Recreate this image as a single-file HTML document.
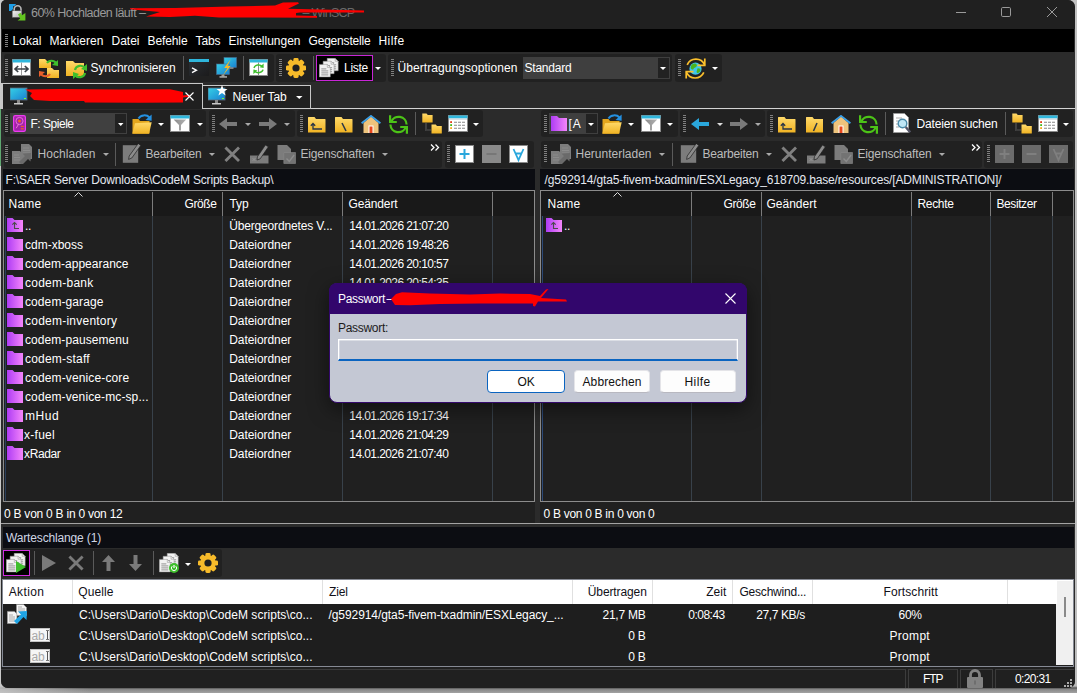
<!DOCTYPE html>
<html lang="de"><head><meta charset="utf-8"><title>WinSCP</title>
<style>
html,body{margin:0;padding:0;}
body{width:1077px;height:693px;overflow:hidden;position:relative;background:linear-gradient(to right,rgba(205,205,205,.75) 0,rgba(205,205,205,0) 90px),linear-gradient(to bottom,#c2c2c2 0,#bebebe 686px,#585858 688px,#888 689.5px,#a2a2a2 693px);font-family:"Liberation Sans", sans-serif;font-size:12px;}
div,span,svg{position:absolute;box-sizing:border-box;}
span{white-space:pre;line-height:16px;height:16px;}
</style></head><body>
<div style="left:1px;top:0px;width:1074px;height:688px;background:#2b2b2b;border-radius:5px 7px 7px 7px;"></div>
<div style="left:1px;top:0px;width:1074px;height:29px;background:#202020;border-radius:5px 7px 0 0;"></div>
<div style="left:2px;top:29px;width:1072px;height:23px;background:#000;"></div>
<svg style="left:9px;top:4px;" width="17" height="17" viewBox="0 0 17 17"><polygon points="0,0 7.2,0 5.2,2.2 4,2.2 4,5 2,7 0,7" fill="#1e9fe8"/><path d="M5.2 7.2V5.2a3.4 3.4 0 0 1 6.8 0v2" fill="none" stroke="#b8b8b8" stroke-width="1.6"/><rect x="3.2" y="6.8" width="9.6" height="6.6" fill="url(#lk)" stroke="#555" stroke-width=".5"/><polygon points="9,10.5 11.5,8.8 13,11.2 16.4,9 16.4,16.6 8.6,16.6 11.2,14.6" fill="#62c420"/></svg>
<span style="left:31.00px;top:5.00px;color:#9a9a9a;font-size:12.5px;letter-spacing:-0.537px;">60% Hochladen läuft –</span>
<span style="left:302.50px;top:5.00px;color:#6a6a6a;font-size:12.5px;letter-spacing:-0.707px;">– WinSCP</span>
<svg style="left:0px;top:0px;" width="380" height="28" viewBox="0 0 380 28"><path d="M146 16.5 L160 12 L130 9.3 L130 8.2 L175 8 L230 6.5 L275 5.5 L283 2.5 L298 2.2 L299 3.5 L288 8.8 L364 10.6 L364 12.6 L300 12.4 L296 13 L296 15.6 L317 16 L317 17.8 L255 17.6 L219 17.6 L195 15.8 L170 17 Z" fill="#fe0000"/></svg>
<svg style="left:956px;top:11px;" width="11" height="2" viewBox="0 0 11 2"><rect x="0" y="1" width="10" height="1" fill="#9a9a9a"/></svg>
<svg style="left:1000px;top:6px;" width="12" height="12" viewBox="0 0 12 12"><rect x="1.5" y="1.5" width="9" height="9" rx="1.2" fill="none" stroke="#9a9a9a" stroke-width="1"/></svg>
<svg style="left:1046px;top:6px;" width="12" height="12" viewBox="0 0 12 12"><path d="M1 1 L11 11 M11 1 L1 11" stroke="#9a9a9a" stroke-width="1"/></svg>
<div style="left:5px;top:34px;width:3px;height:14px;background:repeating-linear-gradient(to bottom,#808080 0,#808080 1px,transparent 1px,transparent 2px);"></div>
<span style="left:12.50px;top:33.00px;color:#fff;font-size:12px;letter-spacing:0.062px;">Lokal</span>
<span style="left:49.50px;top:33.00px;color:#fff;font-size:12px;letter-spacing:0.071px;">Markieren</span>
<span style="left:111.50px;top:33.00px;color:#fff;font-size:12px;letter-spacing:-0.003px;">Datei</span>
<span style="left:147.50px;top:33.00px;color:#fff;font-size:12px;letter-spacing:-0.100px;">Befehle</span>
<span style="left:195.50px;top:33.00px;color:#fff;font-size:12px;letter-spacing:-0.090px;">Tabs</span>
<span style="left:228.50px;top:33.00px;color:#fff;font-size:12px;letter-spacing:-0.005px;">Einstellungen</span>
<span style="left:308.50px;top:33.00px;color:#fff;font-size:12px;letter-spacing:-0.186px;">Gegenstelle</span>
<span style="left:378.50px;top:33.00px;color:#fff;font-size:12px;letter-spacing:0.397px;">Hilfe</span>
<div style="left:4px;top:54px;width:270px;height:28px;background:#212121;border-radius:3px;"></div>
<div style="left:276px;top:54px;width:110px;height:28px;background:#212121;border-radius:3px;"></div>
<div style="left:388px;top:54px;width:284px;height:28px;background:#212121;border-radius:3px;"></div>
<div style="left:675px;top:54px;width:47px;height:28px;background:#212121;border-radius:3px;"></div>
<div style="left:5px;top:59px;width:3px;height:18px;background:repeating-linear-gradient(to bottom,#808080 0,#808080 1px,transparent 1px,transparent 2px);"></div>
<div style="left:279px;top:59px;width:3px;height:18px;background:repeating-linear-gradient(to bottom,#808080 0,#808080 1px,transparent 1px,transparent 2px);"></div>
<div style="left:391px;top:59px;width:3px;height:18px;background:repeating-linear-gradient(to bottom,#808080 0,#808080 1px,transparent 1px,transparent 2px);"></div>
<div style="left:678px;top:59px;width:3px;height:18px;background:repeating-linear-gradient(to bottom,#808080 0,#808080 1px,transparent 1px,transparent 2px);"></div>
<svg width="0" height="0" style="left:0;top:0"><defs><linearGradient id="fg" x1="0" y1="0" x2="0" y2="1"><stop offset="0" stop-color="#ffd96a"/><stop offset="1" stop-color="#f0b323"/></linearGradient><linearGradient id="pg" x1="0" y1="0" x2="1" y2="0"><stop offset="0" stop-color="#ae3cf4"/><stop offset="1" stop-color="#f486fa"/></linearGradient><linearGradient id="mon" x1="0" y1="0" x2="1" y2="1"><stop offset="0" stop-color="#35d0e6"/><stop offset="1" stop-color="#1a7fd0"/></linearGradient><linearGradient id="fu" x1="0" y1="0" x2="1" y2="0"><stop offset="0" stop-color="#8a8a8a"/><stop offset="1" stop-color="#b4b4b4"/></linearGradient><linearGradient id="cn" x1="0" y1="0" x2="1" y2="1"><stop offset="0" stop-color="#2c3036"/><stop offset="1" stop-color="#1b1b1c"/></linearGradient><linearGradient id="lk" x1="0" y1="0" x2="1" y2="1"><stop offset="0" stop-color="#f2f2f2"/><stop offset="1" stop-color="#b4b4b4"/></linearGradient></defs></svg>
<svg style="left:12px;top:59px;" width="19" height="17" viewBox="0 0 19 17"><rect x="0.5" y="0.5" width="18" height="16" fill="#fff" stroke="#8a8a8a"/><rect x="0.5" y="0.5" width="18" height="3" fill="#2fb6dc"/><path d="M9.5 3.5V16.5" stroke="#999" stroke-width="1"/><path d="M3 10H16M6.2 7L3 10L6.2 13M12.8 7L16 10L12.8 13" stroke="#3c4248" stroke-width="1.7" fill="none"/></svg>
<svg style="left:38px;top:57.5px;" width="21" height="21" viewBox="0 0 21 21"><path d="M1 1h6l2 2h4v7H1z" fill="url(#fg)"/><path d="M9 10h5l2 2h5v8H9z" fill="url(#fg)"/><path d="M9 5a5 4 0 0 1 9 0" stroke="#3fbf2d" stroke-width="2" fill="none"/><polygon points="20,2 20,8 14,7" fill="#3fbf2d"/><path d="M12 16a5 4 0 0 1-9 0" stroke="#e8602c" stroke-width="2" fill="none"/><polygon points="1,19 1,13 7,14" fill="#e8602c"/></svg>
<svg style="left:65.7px;top:58.5px;" width="21" height="21" viewBox="0 0 21 21"><path d="M0 2h7l2 2h9v13H0z" fill="url(#fg)"/><path d="M9 11a5.5 5 0 0 1 10-2" stroke="#3fbf2d" stroke-width="2.2" fill="none"/><polygon points="21,5 21,12 15,10" fill="#3fbf2d"/><path d="M19 14a5.5 5 0 0 1-10 2" stroke="#3fbf2d" stroke-width="2.2" fill="none"/><polygon points="7,20 7,13 13,15" fill="#3fbf2d"/></svg>
<span style="left:90.50px;top:60.00px;color:#fff;font-size:12px;letter-spacing:-0.070px;">Synchronisieren</span>
<div style="left:183px;top:56px;width:1px;height:24px;background:#5a5a5a;"></div>
<svg style="left:189px;top:59px;" width="20" height="17" viewBox="0 0 20 17"><rect x="0" y="0" width="20" height="17" fill="url(#cn)"/><rect x="0" y="0" width="20" height="3" fill="#2fb6dc"/><path d="M3 8.8l4.4 2.4-4.4 2.4" stroke="#fff" stroke-width="1.4" fill="none"/></svg>
<svg style="left:216px;top:57px;" width="21" height="21" viewBox="0 0 21 21"><rect x="8" y="0.5" width="12.5" height="10" fill="url(#mon)" stroke="#4a6a8a" stroke-width=".6"/><rect x="0.5" y="7" width="13" height="10.5" fill="url(#mon)" stroke="#4a6a8a" stroke-width=".6"/><rect x="5.5" y="17.5" width="3" height="2" fill="#999"/><rect x="3.5" y="19.3" width="7.5" height="1.3" fill="#c4c4c4"/><rect x="13.5" y="10.5" width="4" height="1.2" fill="#aaa"/><polygon points="14.8,2 8.2,11 11.4,11 6.5,19 14.6,9 11.5,9" fill="#f8b823"/></svg>
<div style="left:243px;top:56px;width:1px;height:24px;background:#5a5a5a;"></div>
<svg style="left:249px;top:59px;" width="19" height="17" viewBox="0 0 19 17"><rect x="0.5" y="0.5" width="18" height="16" fill="#fff" stroke="#8a8a8a"/><rect x="0.5" y="0.5" width="18" height="3" fill="#2fb6dc"/><path d="M9.5 3.5V16.5" stroke="#8a8a8a" stroke-width="1"/><path d="M5 9a4.6 3.6 0 0 1 8.2-1.6M14 10.6a4.6 3.6 0 0 1-8.2 1.6" stroke="#3fbf2d" stroke-width="1.5" fill="none"/><polygon points="14.6,4.6 14.6,9 10.6,8.2" fill="#3fbf2d"/><polygon points="4.4,15 4.4,10.6 8.4,11.4" fill="#3fbf2d"/></svg>
<svg style="left:286px;top:58px;" width="20" height="20" viewBox="0 0 20 20"><g transform="translate(10 10)"><g fill="#f7bb2a"><rect x="-2.6" y="-10" width="5.2" height="20" rx="1.4" transform="rotate(0)"/><rect x="-2.6" y="-10" width="5.2" height="20" rx="1.4" transform="rotate(45)"/><rect x="-2.6" y="-10" width="5.2" height="20" rx="1.4" transform="rotate(90)"/><rect x="-2.6" y="-10" width="5.2" height="20" rx="1.4" transform="rotate(135)"/></g><circle r="7.7" fill="#f7bb2a"/><circle r="3.6" fill="#212121"/></g></svg>
<div style="left:313px;top:56px;width:1px;height:24px;background:#5a5a5a;"></div>
<div style="left:316px;top:55px;width:57px;height:26px;background:#000;border:1px solid #c826d6;"></div>
<svg style="left:319px;top:58px;" width="20" height="20" viewBox="0 0 20 20"><path d="M8.2 0.3h8l3 3v9.5h-11z" fill="#f2f2f2" stroke="#8a8a8a" stroke-width=".5"/><path d="M16.2 0.3v3h3" fill="none" stroke="#8a8a8a" stroke-width=".5"/><path d="M10.2 4.8h5M10.2 6.8h7M10.2 8.8h7M10.2 10.8h7" stroke="#8a8a8a" stroke-width=".9"/><path d="M4.1 3.2h8l3 3v9.5h-11z" fill="#f2f2f2" stroke="#8a8a8a" stroke-width=".5"/><path d="M12.1 3.2v3h3" fill="none" stroke="#8a8a8a" stroke-width=".5"/><path d="M6.1 7.7h5M6.1 9.7h7M6.1 11.7h7M6.1 13.7h7" stroke="#8a8a8a" stroke-width=".9"/><path d="M0.3 6.4h8l3 3v9.5h-11z" fill="#f2f2f2" stroke="#8a8a8a" stroke-width=".5"/><path d="M8.3 6.4v3h3" fill="none" stroke="#8a8a8a" stroke-width=".5"/><path d="M2.3 10.9h5M2.3 12.9h7M2.3 14.9h7M2.3 16.9h7" stroke="#8a8a8a" stroke-width=".9"/></svg>
<span style="left:344.00px;top:60.00px;color:#fff;font-size:12px;letter-spacing:-0.272px;">Liste</span>
<svg style="left:375px;top:67.0px;" width="6" height="3" viewBox="0 0 6 3"><polygon points="0,0 6,0 3.0,3" fill="#fff"/></svg>
<span style="left:397.50px;top:60.00px;color:#fff;font-size:12px;letter-spacing:0.062px;">Übertragungsoptionen</span>
<div style="left:523px;top:57px;width:147px;height:22px;background:#3f3f3f;"></div>
<div style="left:658px;top:58px;width:11px;height:20px;background:#222;"></div>
<svg style="left:660px;top:67.0px;" width="6" height="3" viewBox="0 0 6 3"><polygon points="0,0 6,0 3.0,3" fill="#fff"/></svg>
<span style="left:524.50px;top:60.00px;color:#fff;font-size:12px;letter-spacing:-0.213px;">Standard</span>
<svg style="left:684.5px;top:57.5px;" width="21" height="21" viewBox="0 0 21 21"><circle cx="10.5" cy="10.7" r="6.1" fill="#3ec6ea"/><path d="M6 8c1.5-2.6 4.5-3 5.6-1.6s-.6 2.6-2 3.4-1 2.4-2.4 1.8S5.2 9.6 6 8zM12.4 10.5c1.8-.6 3.4.4 3 2s-2.4 3-3.4 2.2.2-2.4.4-4.2z" fill="#4ab41e"/><g stroke="#fbc02d" stroke-width="1.7" fill="none"><path d="M2.2 6.8A9.5 9.5 0 0 1 19.6 7"/><path d="M18.8 14.4A9.5 9.5 0 0 1 1.4 14.2"/><path d="M19.8 0.5V7.4H12.5"/><path d="M1.2 20.5V13.6H8.5"/></g></svg>
<svg style="left:711.8px;top:67.0px;" width="6" height="3" viewBox="0 0 6 3"><polygon points="0,0 6,0 3.0,3" fill="#fff"/></svg>
<div style="left:1px;top:108px;width:1074px;height:1px;background:#d4d4d4;"></div>
<div style="left:1px;top:83px;width:202px;height:26px;background:#202020;border:1px solid #c8c8c8;border-bottom:none;border-left:2px solid #c8c8c8;"></div>
<div style="left:202px;top:85px;width:109px;height:24px;background:#202020;border:1px solid #c8c8c8;"></div>
<svg style="left:10px;top:84.7px;" width="20" height="20" viewBox="0 -3 20 20"><rect x="0" y="0" width="17" height="12" fill="url(#mon)" stroke="#5a6a7a" stroke-width=".8"/><rect x="14" y="10" width="2" height="1" fill="#7f3"/><rect x="7" y="12" width="3" height="3" fill="#8a8a8a"/><rect x="4" y="15" width="9" height="1.5" fill="#c8c8c8"/></svg>
<svg style="left:0px;top:82px;" width="210" height="28" viewBox="0 82 210 28"><path d="M25 89.5 L60 89 L120 89.6 L170 89.3 L183 92 L183 95.5 L190 94.8 L190 96.6 L183 97.5 L183 102.5 L140 102.8 L85 102.5 L84 101 L50 101 L34 100 L30 96 L32 93 Z" fill="#fe0000"/></svg>
<svg style="left:185px;top:92px;" width="9" height="9" viewBox="0 0 9 9"><path d="M0.5 0.5L8.5 8.5M8.5 0.5L0.5 8.5" stroke="#fff" stroke-width="1.1"/></svg>
<svg style="left:208.3px;top:85px;" width="20" height="20" viewBox="0 -3 20 20"><rect x="0" y="0" width="17" height="12" fill="url(#mon)" stroke="#5a6a7a" stroke-width=".8"/><rect x="14" y="10" width="2" height="1" fill="#7f3"/><rect x="7" y="12" width="3" height="3" fill="#8a8a8a"/><rect x="4" y="15" width="9" height="1.5" fill="#c8c8c8"/><polygon points="14,-3 15.5,1 19.5,1 16.3,3.4 17.6,7.5 14,5 10.4,7.5 11.7,3.4 8.5,1 12.5,1" fill="#fff"/></svg>
<span style="left:232.50px;top:89.00px;color:#fff;font-size:12px;letter-spacing:-0.128px;">Neuer Tab</span>
<svg style="left:296px;top:96.0px;" width="6.5" height="3" viewBox="0 0 6.5 3"><polygon points="0,0 6.5,0 3.25,3" fill="#fff"/></svg>
<div style="left:1px;top:109px;width:1074px;height:60px;background:#2b2b2b;"></div>
<div style="left:0px;top:109px;width:1px;height:57px;background:#5ea870;"></div>
<div style="left:4px;top:110px;width:202px;height:27px;background:#212121;border-radius:3px;"></div>
<div style="left:209px;top:110px;width:86px;height:27px;background:#212121;border-radius:3px;"></div>
<div style="left:297px;top:110px;width:186px;height:27px;background:#212121;border-radius:3px;"></div>
<div style="left:5px;top:115px;width:3px;height:18px;background:repeating-linear-gradient(to bottom,#808080 0,#808080 1px,transparent 1px,transparent 2px);"></div>
<div style="left:212px;top:115px;width:3px;height:18px;background:repeating-linear-gradient(to bottom,#808080 0,#808080 1px,transparent 1px,transparent 2px);"></div>
<div style="left:300px;top:115px;width:3px;height:18px;background:repeating-linear-gradient(to bottom,#808080 0,#808080 1px,transparent 1px,transparent 2px);"></div>
<div style="left:10px;top:113px;width:117px;height:21px;background:#404040;"></div>
<div style="left:115px;top:114px;width:11px;height:19px;background:#222;"></div>
<svg style="left:118px;top:123.0px;" width="5.5" height="3" viewBox="0 0 5.5 3"><polygon points="0,0 5.5,0 2.75,3" fill="#fff"/></svg>
<svg style="left:13.3px;top:115.3px;" width="13" height="17" viewBox="0 0 13 17"><rect x="0.6" y="0.6" width="11.8" height="15.8" rx="1.6" fill="#a222aa" stroke="#ee3cf0" stroke-width="1.2"/><circle cx="6.5" cy="6" r="3.6" fill="none" stroke="#f27ad8" stroke-width=".9"/><circle cx="6.5" cy="6" r="1.5" fill="#f0602a"/><path d="M3.2 13.2l2.6-4.4" stroke="#f27ad8" stroke-width=".9"/><rect x="7.8" y="10.8" width="3" height="1.2" fill="#f0602a"/><rect x="7.8" y="13.2" width="3" height="1.2" fill="#f0602a"/></svg>
<span style="left:30.50px;top:116.00px;color:#fff;font-size:12px;letter-spacing:-0.484px;">F: Spiele</span>
<svg style="left:131.5px;top:113.5px;" width="20" height="20" viewBox="0 0 20 20"><path d="M0.5 5h6l1.5 2h9.5v12.5H0.5z" fill="#e3a61e"/><path d="M0.3 19.7L3 9.2l16.7-1L17 19.7z" fill="url(#fg)"/><path d="M6.5 4.5a6.5 5.5 0 0 1 11-1" stroke="#2490e0" stroke-width="2" fill="none"/><polygon points="19.6,0.5 19.6,6.8 13.5,6" fill="#2490e0"/></svg>
<svg style="left:157.5px;top:123.0px;" width="6" height="3" viewBox="0 0 6 3"><polygon points="0,0 6,0 3.0,3" fill="#fff"/></svg>
<svg style="left:170px;top:115px;" width="20" height="17" viewBox="0 0 20 17"><rect x="0.5" y="0.5" width="19" height="16" fill="#fff" stroke="#8a8a8a"/><rect x="0.5" y="0.5" width="19" height="3" fill="#2fb6dc"/><polygon points="3.6,4.5 16.2,4.5 11,10 11,15.5 9,15.5 9,10" fill="url(#fu)"/></svg>
<svg style="left:196.5px;top:123.0px;" width="6" height="3" viewBox="0 0 6 3"><polygon points="0,0 6,0 3.0,3" fill="#fff"/></svg>
<svg style="left:219px;top:118px;" width="18" height="12" viewBox="0 0 18 12"><polygon points="0,6 8,0 8,4 18,4 18,8 8,8 8,12" fill="#7a7a7a"/></svg>
<svg style="left:245px;top:123.0px;" width="6" height="3" viewBox="0 0 6 3"><polygon points="0,0 6,0 3.0,3" fill="#aaa"/></svg>
<svg style="left:259px;top:118px;" width="18" height="12" viewBox="0 0 18 12"><polygon points="18,6 10,0 10,4 0,4 0,8 10,8 10,12" fill="#7a7a7a"/></svg>
<svg style="left:284px;top:123.0px;" width="6" height="3" viewBox="0 0 6 3"><polygon points="0,0 6,0 3.0,3" fill="#aaa"/></svg>
<svg style="left:308px;top:117px;" width="17.5" height="16" viewBox="0 0 17.5 16"><path d="M0 0.5a.5.5 0 0 1 .5-.5h6l1.5 2h9a.5.5 0 0 1 .5.5v13H0z" fill="url(#fg)"/><path d="M5 6.5v5.5h9M2.8 8.7L5 6.5l2.2 2.2" stroke="#2a3648" stroke-width="1.3" fill="none"/></svg>
<svg style="left:335px;top:117px;" width="17.5" height="16" viewBox="0 0 17.5 16"><path d="M0 0.5a.5.5 0 0 1 .5-.5h6l1.5 2h9a.5.5 0 0 1 .5.5v13H0z" fill="url(#fg)"/><path d="M7 6l4 8" stroke="#2a3648" stroke-width="1.5"/></svg>
<svg style="left:361px;top:115px;" width="20" height="18" viewBox="0 0 20 18"><polygon points="2.5,8 10,1.5 17.5,8 17.5,18 2.5,18" fill="#eec47c"/><rect x="7.5" y="10.5" width="5" height="7.5" fill="#fff"/><rect x="8.5" y="11.5" width="3" height="6.5" fill="#e8471c"/><path d="M0.6 8.2L10 0.9l9.4 7.3" stroke="#3aa0e8" stroke-width="1.8" fill="none"/></svg>
<svg style="left:388.5px;top:114.5px;" width="19" height="19" viewBox="0 0 19 19"><g stroke="#4cc417" stroke-width="2.2" fill="none"><path d="M2.2 6.8A8 8 0 0 1 17.6 9.5"/><path d="M16.8 12.2A8 8 0 0 1 1.4 9.5"/><path d="M1.1 0.3V7H7.8"/><path d="M17.9 18.7V12H11.2"/></g></svg>
<div style="left:415px;top:112px;width:1px;height:23px;background:#5a5a5a;"></div>
<svg style="left:421.5px;top:113.3px;" width="20" height="21" viewBox="0 0 20 21"><path d="M0.3 0.5h4.2l1.3 1.5h4.8v7.5H0.3z" fill="url(#fg)"/><path d="M9.5 11.5h4.2l1.3 1.5h4.8v7.5H9.5z" fill="url(#fg)"/><path d="M4 10.5v6.5h5" stroke="#8a8a8a" stroke-width="1.2" stroke-dasharray="1 1" fill="none"/></svg>
<svg style="left:448px;top:115px;" width="20" height="17" viewBox="0 0 20 17"><rect x="0.5" y="0.5" width="19" height="16" fill="#fff" stroke="#8a8a8a"/><rect x="0.5" y="0.5" width="19" height="3" fill="#2fb6dc"/><rect x="1" y="3.5" width="18" height="1.4" fill="#d8dde4"/><rect x="2.2" y="6.2" width="1.8" height="1.8" fill="#e23a14"/><rect x="2.2" y="9.2" width="1.8" height="1.8" fill="#3fb91d"/><rect x="2.2" y="12.2" width="1.8" height="1.8" fill="#f5a81c"/><path d="M6 7.2h3M10 7.2h3M14 7.2h3M6 10.2h3M10 10.2h3M14 10.2h3M6 13.2h3M10 13.2h3M14 13.2h3" stroke="#888" stroke-width="1.1"/></svg>
<svg style="left:472.5px;top:123.0px;" width="6" height="3" viewBox="0 0 6 3"><polygon points="0,0 6,0 3.0,3" fill="#fff"/></svg>
<div style="left:4px;top:141px;width:438px;height:27px;background:#212121;border-radius:3px;"></div>
<div style="left:445px;top:141px;width:89px;height:27px;background:#212121;border-radius:3px;"></div>
<div style="left:5px;top:145px;width:3px;height:18px;background:repeating-linear-gradient(to bottom,#808080 0,#808080 1px,transparent 1px,transparent 2px);"></div>
<div style="left:447px;top:145px;width:3px;height:18px;background:repeating-linear-gradient(to bottom,#808080 0,#808080 1px,transparent 1px,transparent 2px);"></div>
<svg style="left:12px;top:144px;" width="21" height="20" viewBox="0 0 21 20"><path d="M9 0h8l3 3v12H9z" fill="#7c7c7c"/><path d="M11 4h6M11 6.5h7M11 9h7" stroke="#8c8c8c" stroke-width=".9"/><path d="M0 7h8l3 3v10H0z" fill="#7c7c7c"/><path d="M2 11h5M2 13.5h6M2 16h6" stroke="#8c8c8c" stroke-width=".9"/><polygon points="7,18 13,12 10.5,9.5 19,9 18.5,17.5 16,15 10,21" fill="#6a6a6a"/></svg>
<span style="left:37.50px;top:146.00px;color:#bcbcbc;font-size:12px;letter-spacing:0.069px;">Hochladen</span>
<svg style="left:103px;top:153.0px;" width="6" height="3" viewBox="0 0 6 3"><polygon points="0,0 6,0 3.0,3" fill="#aaa"/></svg>
<div style="left:115px;top:143px;width:1px;height:23px;background:#5a5a5a;"></div>
<svg style="left:122px;top:144px;" width="19" height="20" viewBox="0 0 19 20"><path d="M0.8 1.2h15.4v17.6H0.8z" fill="#7c7c7c"/><path d="M16.2 -0.5l2.6 1.9-9 12.6-3.2 1.4 0.6-3.4z" fill="#8c8c8c" stroke="#212121" stroke-width=".7"/></svg>
<span style="left:145.50px;top:146.00px;color:#bcbcbc;font-size:12px;letter-spacing:-0.205px;">Bearbeiten</span>
<svg style="left:209px;top:153.0px;" width="6" height="3" viewBox="0 0 6 3"><polygon points="0,0 6,0 3.0,3" fill="#aaa"/></svg>
<svg style="left:223.5px;top:146px;" width="16.5" height="16.5" viewBox="0 0 17 17"><path d="M1.5 1.5L15.5 15.5M15.5 1.5L1.5 15.5" stroke="#808080" stroke-width="3"/></svg>
<svg style="left:250px;top:145px;" width="19" height="19" viewBox="0 0 19 19"><rect x="0" y="10.5" width="18.5" height="8" fill="#7c7c7c"/><path d="M15.4 0l3 1.8-8.2 12-3.2 1.2 0.4-3.2z" fill="#8c8c8c" stroke="#212121" stroke-width=".7"/><path d="M2.5 13l3 3M5.5 13l-3 3" stroke="#9a9a9a" stroke-width=".8"/></svg>
<svg style="left:277px;top:144px;" width="19" height="20" viewBox="0 0 19 20"><path d="M0.5 1h9.5l4 4v11H0.5z" fill="#7c7c7c"/><path d="M6.8 8.5h11.7v11H6.8z" fill="#737373" stroke="#8a8a8a" stroke-width=".6"/><path d="M9.5 14.5l2.8 3 4.8-6.5" stroke="#8c8c8c" stroke-width="1.4" fill="none"/></svg>
<span style="left:300.50px;top:146.00px;color:#bcbcbc;font-size:12px;letter-spacing:-0.159px;">Eigenschaften</span>
<svg style="left:382px;top:153.0px;" width="6" height="3" viewBox="0 0 6 3"><polygon points="0,0 6,0 3.0,3" fill="#aaa"/></svg>
<svg style="left:430px;top:144px;" width="10" height="7" viewBox="0 0 10 7"><path d="M1 0.5l3 3-3 3M5.5 0.5l3 3-3 3" stroke="#fff" stroke-width="1.3" fill="none"/></svg>
<svg style="left:455px;top:145px;" width="19" height="18" viewBox="0 0 19 18"><rect x="0.5" y="0.5" width="18" height="17" fill="#fff" stroke="#8a8a8a"/><path d="M9.5 4v10M4.5 9h10" stroke="#2aa7dc" stroke-width="2"/></svg>
<svg style="left:482px;top:145px;" width="19" height="18" viewBox="0 0 19 18"><rect x="0.5" y="0.5" width="18" height="17" fill="#8a8a8a" stroke="#8a8a8a"/><path d="M4.5 9h10" stroke="#777" stroke-width="2"/></svg>
<svg style="left:509px;top:145px;" width="19" height="18" viewBox="0 0 19 18"><rect x="0.5" y="0.5" width="18" height="17" fill="#fff" stroke="#8a8a8a"/><path d="M4.5 4l5 11 5-11M6.5 8.5h6" stroke="#2aa7dc" stroke-width="1.8" fill="none"/></svg>
<div style="left:541px;top:110px;width:137px;height:27px;background:#212121;border-radius:3px;"></div>
<div style="left:680px;top:110px;width:85px;height:27px;background:#212121;border-radius:3px;"></div>
<div style="left:767px;top:110px;width:306px;height:27px;background:#212121;border-radius:3px;"></div>
<div style="left:544px;top:115px;width:3px;height:18px;background:repeating-linear-gradient(to bottom,#808080 0,#808080 1px,transparent 1px,transparent 2px);"></div>
<div style="left:683px;top:115px;width:3px;height:18px;background:repeating-linear-gradient(to bottom,#808080 0,#808080 1px,transparent 1px,transparent 2px);"></div>
<div style="left:770px;top:115px;width:3px;height:18px;background:repeating-linear-gradient(to bottom,#808080 0,#808080 1px,transparent 1px,transparent 2px);"></div>
<div style="left:549px;top:113px;width:49px;height:21px;background:#3f3f3f;"></div>
<div style="left:586px;top:114px;width:11px;height:19px;background:#222;"></div>
<svg style="left:588px;top:123.0px;" width="6" height="3" viewBox="0 0 6 3"><polygon points="0,0 6,0 3.0,3" fill="#fff"/></svg>
<svg style="left:551px;top:116px;" width="16" height="15" viewBox="0 0 16 15"><path d="M0 0h6l2 2h8v13H0z" fill="url(#pg)"/></svg>
<span style="left:568.50px;top:116.00px;color:#fff;font-size:12px;letter-spacing:0.828px;">[A</span>
<svg style="left:602px;top:113.5px;" width="20" height="20" viewBox="0 0 20 20"><path d="M0.5 5h6l1.5 2h9.5v12.5H0.5z" fill="#e3a61e"/><path d="M0.3 19.7L3 9.2l16.7-1L17 19.7z" fill="url(#fg)"/><path d="M6.5 4.5a6.5 5.5 0 0 1 11-1" stroke="#2490e0" stroke-width="2" fill="none"/><polygon points="19.6,0.5 19.6,6.8 13.5,6" fill="#2490e0"/></svg>
<svg style="left:628px;top:123.0px;" width="6" height="3" viewBox="0 0 6 3"><polygon points="0,0 6,0 3.0,3" fill="#fff"/></svg>
<svg style="left:640.5px;top:115px;" width="20" height="17" viewBox="0 0 20 17"><rect x="0.5" y="0.5" width="19" height="16" fill="#fff" stroke="#8a8a8a"/><rect x="0.5" y="0.5" width="19" height="3" fill="#2fb6dc"/><polygon points="3.6,4.5 16.2,4.5 11,10 11,15.5 9,15.5 9,10" fill="url(#fu)"/></svg>
<svg style="left:667px;top:123.0px;" width="6" height="3" viewBox="0 0 6 3"><polygon points="0,0 6,0 3.0,3" fill="#fff"/></svg>
<svg style="left:691px;top:118px;" width="18" height="12" viewBox="0 0 18 12"><polygon points="0,6 8,0 8,4 18,4 18,8 8,8 8,12" fill="#2aa7dc"/></svg>
<svg style="left:717px;top:123.0px;" width="6" height="3" viewBox="0 0 6 3"><polygon points="0,0 6,0 3.0,3" fill="#ddd"/></svg>
<svg style="left:730px;top:118px;" width="18" height="12" viewBox="0 0 18 12"><polygon points="18,6 10,0 10,4 0,4 0,8 10,8 10,12" fill="#7a7a7a"/></svg>
<svg style="left:755px;top:123.0px;" width="6" height="3" viewBox="0 0 6 3"><polygon points="0,0 6,0 3.0,3" fill="#aaa"/></svg>
<svg style="left:778px;top:117px;" width="17.5" height="16" viewBox="0 0 17.5 16"><path d="M0 0.5a.5.5 0 0 1 .5-.5h6l1.5 2h9a.5.5 0 0 1 .5.5v13H0z" fill="url(#fg)"/><path d="M5 6.5v5.5h9M2.8 8.7L5 6.5l2.2 2.2" stroke="#2a3648" stroke-width="1.3" fill="none"/></svg>
<svg style="left:805.5px;top:117px;" width="17.5" height="16" viewBox="0 0 17.5 16"><path d="M0 0.5a.5.5 0 0 1 .5-.5h6l1.5 2h9a.5.5 0 0 1 .5.5v13H0z" fill="url(#fg)"/><path d="M11 6l-3.5 8" stroke="#2a3648" stroke-width="1.5"/></svg>
<svg style="left:831px;top:115px;" width="20" height="18" viewBox="0 0 20 18"><polygon points="2.5,8 10,1.5 17.5,8 17.5,18 2.5,18" fill="#eec47c"/><rect x="7.5" y="10.5" width="5" height="7.5" fill="#fff"/><rect x="8.5" y="11.5" width="3" height="6.5" fill="#e8471c"/><path d="M0.6 8.2L10 0.9l9.4 7.3" stroke="#3aa0e8" stroke-width="1.8" fill="none"/></svg>
<svg style="left:859px;top:114.5px;" width="19" height="19" viewBox="0 0 19 19"><g stroke="#4cc417" stroke-width="2.2" fill="none"><path d="M2.2 6.8A8 8 0 0 1 17.6 9.5"/><path d="M16.8 12.2A8 8 0 0 1 1.4 9.5"/><path d="M1.1 0.3V7H7.8"/><path d="M17.9 18.7V12H11.2"/></g></svg>
<div style="left:885px;top:112px;width:1px;height:23px;background:#5a5a5a;"></div>
<svg style="left:893px;top:113px;" width="19" height="21" viewBox="0 0 19 21"><path d="M0.5 0.5h11l4 4v15h-15z" fill="#fff" stroke="#999"/><path d="M3 5h6M3 8h9M3 11h3M3 14h3" stroke="#aaa" stroke-width="1"/><circle cx="9.5" cy="10.5" r="4.3" fill="#bfe6f5" stroke="#4a8aa8" stroke-width="1.4"/><path d="M12.7 14l4.5 5.2" stroke="#556" stroke-width="2.4"/></svg>
<span style="left:916.50px;top:116.00px;color:#fff;font-size:12px;letter-spacing:-0.171px;">Dateien suchen</span>
<div style="left:1005px;top:112px;width:1px;height:23px;background:#5a5a5a;"></div>
<svg style="left:1012px;top:113.3px;" width="20" height="21" viewBox="0 0 20 21"><path d="M0.3 0.5h4.2l1.3 1.5h4.8v7.5H0.3z" fill="url(#fg)"/><path d="M9.5 11.5h4.2l1.3 1.5h4.8v7.5H9.5z" fill="url(#fg)"/><path d="M4 10.5v6.5h5" stroke="#8a8a8a" stroke-width="1.2" stroke-dasharray="1 1" fill="none"/></svg>
<svg style="left:1038px;top:115px;" width="20" height="17" viewBox="0 0 20 17"><rect x="0.5" y="0.5" width="19" height="16" fill="#fff" stroke="#8a8a8a"/><rect x="0.5" y="0.5" width="19" height="3" fill="#2fb6dc"/><rect x="1" y="3.5" width="18" height="1.4" fill="#d8dde4"/><rect x="2.2" y="6.2" width="1.8" height="1.8" fill="#e23a14"/><rect x="2.2" y="9.2" width="1.8" height="1.8" fill="#3fb91d"/><rect x="2.2" y="12.2" width="1.8" height="1.8" fill="#f5a81c"/><path d="M6 7.2h3M10 7.2h3M14 7.2h3M6 10.2h3M10 10.2h3M14 10.2h3M6 13.2h3M10 13.2h3M14 13.2h3" stroke="#888" stroke-width="1.1"/></svg>
<svg style="left:1063px;top:123.0px;" width="6" height="3" viewBox="0 0 6 3"><polygon points="0,0 6,0 3.0,3" fill="#fff"/></svg>
<div style="left:541px;top:141px;width:441px;height:27px;background:#212121;border-radius:3px;"></div>
<div style="left:984px;top:141px;width:89px;height:27px;background:#212121;border-radius:3px;"></div>
<div style="left:544px;top:145px;width:3px;height:18px;background:repeating-linear-gradient(to bottom,#808080 0,#808080 1px,transparent 1px,transparent 2px);"></div>
<div style="left:987px;top:145px;width:3px;height:18px;background:repeating-linear-gradient(to bottom,#808080 0,#808080 1px,transparent 1px,transparent 2px);"></div>
<svg style="left:551px;top:144px;" width="21" height="20" viewBox="0 0 21 20"><path d="M9 0h8l3 3v12H9z" fill="#7c7c7c"/><path d="M11 4h6M11 6.5h7M11 9h7" stroke="#8c8c8c" stroke-width=".9"/><path d="M0 7h8l3 3v10H0z" fill="#7c7c7c"/><path d="M2 11h5M2 13.5h6M2 16h6" stroke="#8c8c8c" stroke-width=".9"/><polygon points="7,18 13,12 10.5,9.5 19,9 18.5,17.5 16,15 10,21" fill="#6a6a6a"/></svg>
<span style="left:575.50px;top:146.00px;color:#bcbcbc;font-size:12px;letter-spacing:-0.005px;">Herunterladen</span>
<svg style="left:659px;top:153.0px;" width="6" height="3" viewBox="0 0 6 3"><polygon points="0,0 6,0 3.0,3" fill="#aaa"/></svg>
<div style="left:672px;top:143px;width:1px;height:23px;background:#5a5a5a;"></div>
<svg style="left:680px;top:144px;" width="19" height="20" viewBox="0 0 19 20"><path d="M0.8 1.2h15.4v17.6H0.8z" fill="#7c7c7c"/><path d="M16.2 -0.5l2.6 1.9-9 12.6-3.2 1.4 0.6-3.4z" fill="#8c8c8c" stroke="#212121" stroke-width=".7"/></svg>
<span style="left:702.50px;top:146.00px;color:#bcbcbc;font-size:12px;letter-spacing:-0.205px;">Bearbeiten</span>
<svg style="left:766px;top:153.0px;" width="6" height="3" viewBox="0 0 6 3"><polygon points="0,0 6,0 3.0,3" fill="#aaa"/></svg>
<svg style="left:780.5px;top:146px;" width="16.5" height="16.5" viewBox="0 0 17 17"><path d="M1.5 1.5L15.5 15.5M15.5 1.5L1.5 15.5" stroke="#808080" stroke-width="3"/></svg>
<svg style="left:807px;top:145px;" width="19" height="19" viewBox="0 0 19 19"><rect x="0" y="10.5" width="18.5" height="8" fill="#7c7c7c"/><path d="M15.4 0l3 1.8-8.2 12-3.2 1.2 0.4-3.2z" fill="#8c8c8c" stroke="#212121" stroke-width=".7"/><path d="M2.5 13l3 3M5.5 13l-3 3" stroke="#9a9a9a" stroke-width=".8"/></svg>
<svg style="left:834px;top:144px;" width="19" height="20" viewBox="0 0 19 20"><path d="M0.5 1h9.5l4 4v11H0.5z" fill="#7c7c7c"/><path d="M6.8 8.5h11.7v11H6.8z" fill="#737373" stroke="#8a8a8a" stroke-width=".6"/><path d="M9.5 14.5l2.8 3 4.8-6.5" stroke="#8c8c8c" stroke-width="1.4" fill="none"/></svg>
<span style="left:857.50px;top:146.00px;color:#bcbcbc;font-size:12px;letter-spacing:-0.159px;">Eigenschaften</span>
<svg style="left:939px;top:153.0px;" width="6" height="3" viewBox="0 0 6 3"><polygon points="0,0 6,0 3.0,3" fill="#aaa"/></svg>
<svg style="left:971px;top:144px;" width="10" height="7" viewBox="0 0 10 7"><path d="M1 0.5l3 3-3 3M5.5 0.5l3 3-3 3" stroke="#fff" stroke-width="1.3" fill="none"/></svg>
<svg style="left:995px;top:145px;" width="19" height="18" viewBox="0 0 19 18"><rect x="0.5" y="0.5" width="18" height="17" fill="#6b6b6b" stroke="#6b6b6b"/><path d="M9.5 4v10M4.5 9h10" stroke="#7f7f7f" stroke-width="2"/></svg>
<svg style="left:1022px;top:145px;" width="19" height="18" viewBox="0 0 19 18"><rect x="0.5" y="0.5" width="18" height="17" fill="#6b6b6b" stroke="#6b6b6b"/><path d="M4.5 9h10" stroke="#7f7f7f" stroke-width="2"/></svg>
<svg style="left:1049px;top:145px;" width="19" height="18" viewBox="0 0 19 18"><rect x="0.5" y="0.5" width="18" height="17" fill="#6b6b6b" stroke="#6b6b6b"/><path d="M4.5 4l5 11 5-11M6.5 8.5h6" stroke="#7f7f7f" stroke-width="1.8" fill="none"/></svg>
<div style="left:3px;top:169px;width:532px;height:21px;background:#0c0d12;"></div>
<div style="left:540px;top:169px;width:534px;height:21px;background:#0c0d12;"></div>
<span style="left:5.50px;top:172.00px;color:#e4e8f0;font-size:12px;letter-spacing:-0.191px;">F:\SAER Server Downloads\CodeM Scripts Backup\</span>
<span style="left:544.50px;top:172.00px;color:#e4e8f0;font-size:12px;letter-spacing:-0.152px;">/g592914/gta5-fivem-txadmin/ESXLegacy_618709.base/resources/[ADMINISTRATION]/</span>
<div style="left:3px;top:190px;width:532px;height:312px;background:#202020;border:1px solid #8c8c8c;"></div>
<div style="left:4px;top:191px;width:530px;height:25px;background:#191919;"></div>
<div style="left:152px;top:192px;width:1px;height:24px;background:#7c7c7c;"></div>
<div style="left:152px;top:216px;width:1px;height:285px;background:#38414a;"></div>
<div style="left:222px;top:192px;width:1px;height:24px;background:#7c7c7c;"></div>
<div style="left:222px;top:216px;width:1px;height:285px;background:#38414a;"></div>
<div style="left:342px;top:192px;width:1px;height:24px;background:#7c7c7c;"></div>
<div style="left:342px;top:216px;width:1px;height:285px;background:#38414a;"></div>
<div style="left:492px;top:192px;width:1px;height:24px;background:#7c7c7c;"></div>
<div style="left:492px;top:216px;width:1px;height:285px;background:#38414a;"></div>
<div style="left:540px;top:190px;width:534px;height:312px;background:#202020;border:1px solid #8c8c8c;"></div>
<div style="left:541px;top:191px;width:532px;height:25px;background:#191919;"></div>
<div style="left:691px;top:192px;width:1px;height:24px;background:#7c7c7c;"></div>
<div style="left:691px;top:216px;width:1px;height:285px;background:#38414a;"></div>
<div style="left:761px;top:192px;width:1px;height:24px;background:#7c7c7c;"></div>
<div style="left:761px;top:216px;width:1px;height:285px;background:#38414a;"></div>
<div style="left:911px;top:192px;width:1px;height:24px;background:#7c7c7c;"></div>
<div style="left:911px;top:216px;width:1px;height:285px;background:#38414a;"></div>
<div style="left:990px;top:192px;width:1px;height:24px;background:#7c7c7c;"></div>
<div style="left:990px;top:216px;width:1px;height:285px;background:#38414a;"></div>
<div style="left:1052px;top:192px;width:1px;height:24px;background:#7c7c7c;"></div>
<div style="left:1052px;top:216px;width:1px;height:285px;background:#38414a;"></div>
<div style="left:5px;top:216px;width:1px;height:285px;background:#2a3f5c;"></div>
<div style="left:542px;top:216px;width:1px;height:285px;background:#2d4a78;"></div>
<svg style="left:74px;top:192px;" width="9" height="5" viewBox="0 0 9 5"><path d="M0.5 4.5l4-4 4 4" stroke="#ddd" stroke-width="1" fill="none"/></svg>
<svg style="left:613px;top:192px;" width="9" height="5" viewBox="0 0 9 5"><path d="M0.5 4.5l4-4 4 4" stroke="#ddd" stroke-width="1" fill="none"/></svg>
<span style="left:8.50px;top:195.50px;color:#fff;font-size:12px;letter-spacing:0.246px;">Name</span>
<span style="left:184.50px;top:195.50px;color:#fff;font-size:12px;letter-spacing:-0.403px;">Größe</span>
<span style="left:229.50px;top:195.50px;color:#fff;font-size:12px;letter-spacing:-0.115px;">Typ</span>
<span style="left:348.50px;top:195.50px;color:#fff;font-size:12px;letter-spacing:-0.131px;">Geändert</span>
<span style="left:547.50px;top:195.50px;color:#fff;font-size:12px;letter-spacing:0.246px;">Name</span>
<span style="left:723.50px;top:195.50px;color:#fff;font-size:12px;letter-spacing:-0.403px;">Größe</span>
<span style="left:766.50px;top:195.50px;color:#fff;font-size:12px;letter-spacing:-0.006px;">Geändert</span>
<span style="left:917.50px;top:195.50px;color:#fff;font-size:12px;letter-spacing:-0.339px;">Rechte</span>
<span style="left:996.50px;top:195.50px;color:#fff;font-size:12px;letter-spacing:-0.420px;">Besitzer</span>
<svg style="left:7px;top:218px;" width="16" height="14" viewBox="0 0 16 14"><path d="M0 0h5.5l2 2h8.5v12H0z" fill="url(#pg)"/><path d="M7.5 4.5v6h4.5M5.3 6.7l2.2-2.2 2.2 2.2" stroke="#4a4a4a" stroke-width="1.1" fill="none"/></svg>
<span style="left:25.00px;top:217.50px;color:#fff;font-size:12px;letter-spacing:-0.336px;">..</span>
<span style="left:229.20px;top:217.50px;color:#fff;font-size:12px;letter-spacing:-0.158px;">Übergeordnetes V...</span>
<span style="left:349.30px;top:217.50px;color:#fff;font-size:12px;letter-spacing:-0.585px;">14.01.2026 21:07:20</span>
<svg style="left:7px;top:237px;" width="16" height="14" viewBox="0 0 16 14"><path d="M0 0h5.5l2 2h8.5v12H0z" fill="url(#pg)"/></svg>
<span style="left:25.00px;top:236.50px;color:#fff;font-size:12px;letter-spacing:-0.002px;">cdm-xboss</span>
<span style="left:229.20px;top:236.50px;color:#fff;font-size:12px;letter-spacing:-0.064px;">Dateiordner</span>
<span style="left:349.30px;top:236.50px;color:#fff;font-size:12px;letter-spacing:-0.585px;">14.01.2026 19:48:26</span>
<svg style="left:7px;top:256px;" width="16" height="14" viewBox="0 0 16 14"><path d="M0 0h5.5l2 2h8.5v12H0z" fill="url(#pg)"/></svg>
<span style="left:25.00px;top:255.50px;color:#fff;font-size:12px;letter-spacing:0.006px;">codem-appearance</span>
<span style="left:229.20px;top:255.50px;color:#fff;font-size:12px;letter-spacing:-0.064px;">Dateiordner</span>
<span style="left:349.30px;top:255.50px;color:#fff;font-size:12px;letter-spacing:-0.585px;">14.01.2026 20:10:57</span>
<svg style="left:7px;top:275px;" width="16" height="14" viewBox="0 0 16 14"><path d="M0 0h5.5l2 2h8.5v12H0z" fill="url(#pg)"/></svg>
<span style="left:25.00px;top:274.50px;color:#fff;font-size:12px;letter-spacing:0.245px;">codem-bank</span>
<span style="left:229.20px;top:274.50px;color:#fff;font-size:12px;letter-spacing:-0.064px;">Dateiordner</span>
<span style="left:349.30px;top:274.50px;color:#fff;font-size:12px;letter-spacing:-0.585px;">14.01.2026 20:54:35</span>
<svg style="left:7px;top:294px;" width="16" height="14" viewBox="0 0 16 14"><path d="M0 0h5.5l2 2h8.5v12H0z" fill="url(#pg)"/></svg>
<span style="left:25.00px;top:293.50px;color:#fff;font-size:12px;letter-spacing:0.092px;">codem-garage</span>
<span style="left:229.20px;top:293.50px;color:#fff;font-size:12px;letter-spacing:-0.064px;">Dateiordner</span>
<svg style="left:7px;top:313px;" width="16" height="14" viewBox="0 0 16 14"><path d="M0 0h5.5l2 2h8.5v12H0z" fill="url(#pg)"/></svg>
<span style="left:25.00px;top:312.50px;color:#fff;font-size:12px;letter-spacing:0.235px;">codem-inventory</span>
<span style="left:229.20px;top:312.50px;color:#fff;font-size:12px;letter-spacing:-0.064px;">Dateiordner</span>
<svg style="left:7px;top:332px;" width="16" height="14" viewBox="0 0 16 14"><path d="M0 0h5.5l2 2h8.5v12H0z" fill="url(#pg)"/></svg>
<span style="left:25.00px;top:331.50px;color:#fff;font-size:12px;letter-spacing:0.068px;">codem-pausemenu</span>
<span style="left:229.20px;top:331.50px;color:#fff;font-size:12px;letter-spacing:-0.064px;">Dateiordner</span>
<svg style="left:7px;top:351px;" width="16" height="14" viewBox="0 0 16 14"><path d="M0 0h5.5l2 2h8.5v12H0z" fill="url(#pg)"/></svg>
<span style="left:25.00px;top:350.50px;color:#fff;font-size:12px;letter-spacing:0.206px;">codem-staff</span>
<span style="left:229.20px;top:350.50px;color:#fff;font-size:12px;letter-spacing:-0.064px;">Dateiordner</span>
<svg style="left:7px;top:370px;" width="16" height="14" viewBox="0 0 16 14"><path d="M0 0h5.5l2 2h8.5v12H0z" fill="url(#pg)"/></svg>
<span style="left:25.00px;top:369.50px;color:#fff;font-size:12px;letter-spacing:0.130px;">codem-venice-core</span>
<span style="left:229.20px;top:369.50px;color:#fff;font-size:12px;letter-spacing:-0.064px;">Dateiordner</span>
<svg style="left:7px;top:389px;" width="16" height="14" viewBox="0 0 16 14"><path d="M0 0h5.5l2 2h8.5v12H0z" fill="url(#pg)"/></svg>
<span style="left:25.00px;top:388.50px;color:#fff;font-size:12px;letter-spacing:0.113px;">codem-venice-mc-sp...</span>
<span style="left:229.20px;top:388.50px;color:#fff;font-size:12px;letter-spacing:-0.064px;">Dateiordner</span>
<svg style="left:7px;top:408px;" width="16" height="14" viewBox="0 0 16 14"><path d="M0 0h5.5l2 2h8.5v12H0z" fill="url(#pg)"/></svg>
<span style="left:25.00px;top:407.50px;color:#fff;font-size:12px;letter-spacing:0.559px;">mHud</span>
<span style="left:229.20px;top:407.50px;color:#fff;font-size:12px;letter-spacing:-0.064px;">Dateiordner</span>
<span style="left:349.30px;top:407.50px;color:#fff;font-size:12px;letter-spacing:-0.585px;">14.01.2026 19:17:34</span>
<svg style="left:7px;top:427px;" width="16" height="14" viewBox="0 0 16 14"><path d="M0 0h5.5l2 2h8.5v12H0z" fill="url(#pg)"/></svg>
<span style="left:24.00px;top:426.50px;color:#fff;font-size:12px;letter-spacing:0.276px;">x-fuel</span>
<span style="left:229.20px;top:426.50px;color:#fff;font-size:12px;letter-spacing:-0.064px;">Dateiordner</span>
<span style="left:349.30px;top:426.50px;color:#fff;font-size:12px;letter-spacing:-0.585px;">14.01.2026 21:04:29</span>
<svg style="left:7px;top:446px;" width="16" height="14" viewBox="0 0 16 14"><path d="M0 0h5.5l2 2h8.5v12H0z" fill="url(#pg)"/></svg>
<span style="left:24.00px;top:445.50px;color:#fff;font-size:12px;letter-spacing:-0.365px;">xRadar</span>
<span style="left:229.20px;top:445.50px;color:#fff;font-size:12px;letter-spacing:-0.064px;">Dateiordner</span>
<span style="left:349.30px;top:445.50px;color:#fff;font-size:12px;letter-spacing:-0.585px;">14.01.2026 21:07:40</span>
<svg style="left:546px;top:218px;" width="16" height="14" viewBox="0 0 16 14"><path d="M0 0h5.5l2 2h8.5v12H0z" fill="url(#pg)"/><path d="M7.5 4.5v6h4.5M5.3 6.7l2.2-2.2 2.2 2.2" stroke="#4a4a4a" stroke-width="1.1" fill="none"/></svg>
<span style="left:564.00px;top:217.50px;color:#fff;font-size:12px;letter-spacing:-0.336px;">..</span>
<div style="left:1px;top:502px;width:1074px;height:21px;background:#202020;"></div>
<div style="left:1px;top:523px;width:1074px;height:1px;background:#a4a4a4;"></div>
<div style="left:535px;top:502px;width:5px;height:21px;background:#2b2b2b;"></div>
<span style="left:4.00px;top:506.00px;color:#fff;font-size:12px;letter-spacing:-0.243px;">0 B von 0 B in 0 von 12</span>
<span style="left:543.50px;top:506.00px;color:#fff;font-size:12px;letter-spacing:-0.292px;">0 B von 0 B in 0 von 0</span>
<div style="left:1px;top:524px;width:1074px;height:3px;background:#2b2b2b;"></div>
<div style="left:3px;top:527px;width:1071px;height:21px;background:#0c0d12;"></div>
<span style="left:6.00px;top:530.00px;color:#d0d6e4;font-size:12px;letter-spacing:-0.153px;">Warteschlange (1)</span>
<div style="left:1px;top:548px;width:1074px;height:31px;background:#2b2b2b;"></div>
<div style="left:3px;top:549px;width:219px;height:28px;background:#212121;border-radius:3px;"></div>
<div style="left:3px;top:550px;width:27px;height:26px;background:#000;border:1px solid #d02ee0;"></div>
<svg style="left:6px;top:553px;" width="20" height="20" viewBox="0 0 20 20"><path d="M8.2 0.3h8l3 3v9.5h-11z" fill="#f2f2f2" stroke="#8a8a8a" stroke-width=".5"/><path d="M16.2 0.3v3h3" fill="none" stroke="#8a8a8a" stroke-width=".5"/><path d="M10.2 4.8h5M10.2 6.8h7M10.2 8.8h7M10.2 10.8h7" stroke="#8a8a8a" stroke-width=".9"/><path d="M4.1 3.2h8l3 3v9.5h-11z" fill="#f2f2f2" stroke="#8a8a8a" stroke-width=".5"/><path d="M12.1 3.2v3h3" fill="none" stroke="#8a8a8a" stroke-width=".5"/><path d="M6.1 7.7h5M6.1 9.7h7M6.1 11.7h7M6.1 13.7h7" stroke="#8a8a8a" stroke-width=".9"/><path d="M0.3 6.4h8l3 3v9.5h-11z" fill="#f2f2f2" stroke="#8a8a8a" stroke-width=".5"/><path d="M8.3 6.4v3h3" fill="none" stroke="#8a8a8a" stroke-width=".5"/><path d="M2.3 10.9h5M2.3 12.9h7M2.3 14.9h7M2.3 16.9h7" stroke="#8a8a8a" stroke-width=".9"/></svg>
<svg style="left:16px;top:561px;" width="10" height="12" viewBox="0 0 10 12"><polygon points="0,0 10,6 0,12" fill="#3fbf2d"/></svg>
<div style="left:34px;top:551px;width:1px;height:24px;background:#5a5a5a;"></div>
<svg style="left:42px;top:555px;" width="14" height="16" viewBox="0 0 14 16"><polygon points="0,0 14,8 0,16" fill="#7a7a7a"/></svg>
<svg style="left:68px;top:555px;" width="16" height="16" viewBox="0 0 17 17"><path d="M1.5 1.5L15.5 15.5M15.5 1.5L1.5 15.5" stroke="#7a7a7a" stroke-width="3"/></svg>
<div style="left:93px;top:551px;width:1px;height:24px;background:#5a5a5a;"></div>
<svg style="left:102px;top:555px;" width="13" height="16" viewBox="0 0 13 16"><polygon points="6.5,0 13,7 8.5,7 8.5,16 4.5,16 4.5,7 0,7" fill="#7a7a7a"/></svg>
<svg style="left:129px;top:555px;" width="13" height="16" viewBox="0 0 13 16"><polygon points="6.5,16 13,9 8.5,9 8.5,0 4.5,0 4.5,9 0,9" fill="#7a7a7a"/></svg>
<div style="left:153px;top:551px;width:1px;height:24px;background:#5a5a5a;"></div>
<svg style="left:159px;top:553px;" width="20" height="20" viewBox="0 0 20 20"><path d="M8.2 0.3h8l3 3v9.5h-11z" fill="#f2f2f2" stroke="#8a8a8a" stroke-width=".5"/><path d="M16.2 0.3v3h3" fill="none" stroke="#8a8a8a" stroke-width=".5"/><path d="M10.2 4.8h5M10.2 6.8h7M10.2 8.8h7M10.2 10.8h7" stroke="#8a8a8a" stroke-width=".9"/><path d="M4.1 3.2h8l3 3v9.5h-11z" fill="#f2f2f2" stroke="#8a8a8a" stroke-width=".5"/><path d="M12.1 3.2v3h3" fill="none" stroke="#8a8a8a" stroke-width=".5"/><path d="M6.1 7.7h5M6.1 9.7h7M6.1 11.7h7M6.1 13.7h7" stroke="#8a8a8a" stroke-width=".9"/><path d="M0.3 6.4h8l3 3v9.5h-11z" fill="#f2f2f2" stroke="#8a8a8a" stroke-width=".5"/><path d="M8.3 6.4v3h3" fill="none" stroke="#8a8a8a" stroke-width=".5"/><path d="M2.3 10.9h5M2.3 12.9h7M2.3 14.9h7M2.3 16.9h7" stroke="#8a8a8a" stroke-width=".9"/></svg>
<svg style="left:169px;top:563px;" width="10" height="10" viewBox="0 0 10 10"><circle cx="5" cy="5" r="5" fill="#3fbf2d"/><path d="M5 2v3" stroke="#fff" stroke-width="1.2"/><path d="M3.2 3.2a2.6 2.6 0 1 0 3.6 0" stroke="#fff" stroke-width="1" fill="none"/></svg>
<svg style="left:185px;top:562.5px;" width="6" height="3" viewBox="0 0 6 3"><polygon points="0,0 6,0 3.0,3" fill="#fff"/></svg>
<svg style="left:197.5px;top:553px;" width="20" height="20" viewBox="0 0 20 20"><g transform="translate(10 10)"><g fill="#f7bb2a"><rect x="-2.6" y="-10" width="5.2" height="20" rx="1.4" transform="rotate(0)"/><rect x="-2.6" y="-10" width="5.2" height="20" rx="1.4" transform="rotate(45)"/><rect x="-2.6" y="-10" width="5.2" height="20" rx="1.4" transform="rotate(90)"/><rect x="-2.6" y="-10" width="5.2" height="20" rx="1.4" transform="rotate(135)"/></g><circle r="7.7" fill="#f7bb2a"/><circle r="3.6" fill="#212121"/></g></svg>
<div style="left:2px;top:579px;width:1072px;height:88px;background:#1e1e1e;border:1px solid #868a94;"></div>
<div style="left:3px;top:580px;width:1070px;height:24px;background:#fff;"></div>
<div style="left:72px;top:580px;width:1px;height:24px;background:#e0e0e0;"></div>
<div style="left:322px;top:580px;width:1px;height:24px;background:#e0e0e0;"></div>
<div style="left:572px;top:580px;width:1px;height:24px;background:#e0e0e0;"></div>
<div style="left:652px;top:580px;width:1px;height:24px;background:#e0e0e0;"></div>
<div style="left:732px;top:580px;width:1px;height:24px;background:#e0e0e0;"></div>
<div style="left:812px;top:580px;width:1px;height:24px;background:#e0e0e0;"></div>
<div style="left:1007px;top:580px;width:1px;height:24px;background:#e0e0e0;"></div>
<span style="left:8.75px;top:583.50px;color:#101018;font-size:12px;letter-spacing:0.357px;">Aktion</span>
<span style="left:78.25px;top:583.50px;color:#101018;font-size:12px;letter-spacing:0.094px;">Quelle</span>
<span style="left:328.90px;top:583.50px;color:#101018;font-size:12px;letter-spacing:-0.086px;">Ziel</span>
<span style="left:587.75px;top:583.50px;color:#101018;font-size:12px;letter-spacing:-0.105px;">Übertragen</span>
<span style="left:706.25px;top:583.50px;color:#101018;font-size:12px;letter-spacing:-0.004px;">Zeit</span>
<span style="left:739.50px;top:583.50px;color:#101018;font-size:12px;letter-spacing:-0.219px;">Geschwind...</span>
<span style="left:883.50px;top:583.50px;color:#101018;font-size:12px;letter-spacing:0.105px;">Fortschritt</span>
<div style="left:1057px;top:581px;width:16px;height:84px;background:#f0f0f0;"></div>
<div style="left:1056px;top:604px;width:1px;height:61px;background:#f0f0f0;"></div>
<div style="left:1064px;top:597px;width:2px;height:20px;background:#8a8a8a;"></div>
<span style="left:79.00px;top:607.00px;color:#fff;font-size:12px;letter-spacing:0.034px;">C:\Users\Dario\Desktop\CodeM scripts\co...</span>
<span style="left:898.50px;top:607.00px;color:#fff;font-size:12px;letter-spacing:-0.260px;">60%</span>
<span style="left:602.50px;top:607.00px;color:#fff;font-size:12px;letter-spacing:-0.243px;">21,7 MB</span>
<span style="left:79.00px;top:628.00px;color:#fff;font-size:12px;letter-spacing:0.034px;">C:\Users\Dario\Desktop\CodeM scripts\co...</span>
<span style="left:889.50px;top:628.00px;color:#fff;font-size:12px;letter-spacing:0.302px;">Prompt</span>
<span style="left:628.25px;top:628.00px;color:#fff;font-size:12px;letter-spacing:-0.255px;">0 B</span>
<span style="left:79.00px;top:649.00px;color:#fff;font-size:12px;letter-spacing:0.034px;">C:\Users\Dario\Desktop\CodeM scripts\co...</span>
<span style="left:889.50px;top:649.00px;color:#fff;font-size:12px;letter-spacing:0.302px;">Prompt</span>
<span style="left:628.25px;top:649.00px;color:#fff;font-size:12px;letter-spacing:-0.255px;">0 B</span>
<span style="left:328.50px;top:607.00px;color:#fff;font-size:12px;letter-spacing:-0.077px;">/g592914/gta5-fivem-txadmin/ESXLegacy_...</span>
<span style="left:688.25px;top:607.00px;color:#fff;font-size:12px;letter-spacing:-0.507px;">0:08:43</span>
<span style="left:756.25px;top:607.00px;color:#fff;font-size:12px;letter-spacing:-0.392px;">27,7 KB/s</span>
<svg style="left:7px;top:604px;" width="21" height="20" viewBox="0 0 21 20"><path d="M9.5 0.5h7l3 3v8h-10z" fill="#f4f4f4" stroke="#999" stroke-width=".6"/><path d="M11 3h4M11 5h7M11 7h7" stroke="#999" stroke-width=".8"/><path d="M0.4 7.4h7l2.5 2.5v9.7h-9.5z" fill="#f4f4f4" stroke="#999" stroke-width=".6"/><path d="M2 11h4M2 13h6M2 15h6M2 17h6" stroke="#999" stroke-width=".8"/><polygon points="20,7 11,7.5 14,10.5 7,17 10,20 16.5,13 19.5,16" fill="#1ea4e4"/></svg>
<div style="left:30px;top:628px;width:20px;height:14px;background:#f6f6f6;border:1px solid #c4c4c4;"></div>
<span style="left:31.50px;top:627.50px;color:#a8a8a8;font-size:12px;letter-spacing:-0.180px;">ab</span>
<div style="left:46.5px;top:630.5px;width:1px;height:9px;background:#555;"></div>
<div style="left:45.5px;top:630px;width:3px;height:1px;background:#777;"></div>
<div style="left:45.5px;top:639px;width:3px;height:1px;background:#777;"></div>
<div style="left:30px;top:649px;width:20px;height:14px;background:#f6f6f6;border:1px solid #c4c4c4;"></div>
<span style="left:31.50px;top:648.50px;color:#a8a8a8;font-size:12px;letter-spacing:-0.180px;">ab</span>
<div style="left:46.5px;top:651.5px;width:1px;height:9px;background:#555;"></div>
<div style="left:45.5px;top:651px;width:3px;height:1px;background:#777;"></div>
<div style="left:45.5px;top:660px;width:3px;height:1px;background:#777;"></div>
<div style="left:1px;top:667px;width:1074px;height:21px;background:#202020;border-radius:0 0 7px 7px;"></div>
<div style="left:1px;top:669px;width:905px;height:19px;border:1px solid #3c3c3c;border-bottom:none;border-left:none;"></div>
<div style="left:908px;top:669px;width:50px;height:19px;border:1px solid #3c3c3c;border-bottom:none;"></div>
<div style="left:960px;top:669px;width:33px;height:19px;border:1px solid #3c3c3c;border-bottom:none;"></div>
<div style="left:995px;top:669px;width:79px;height:19px;border:1px solid #3c3c3c;border-bottom:none;border-right:none;"></div>
<span style="left:923.00px;top:670.50px;color:#fff;font-size:12px;letter-spacing:-1.057px;">FTP</span>
<span style="left:1015.00px;top:670.50px;color:#fff;font-size:12px;letter-spacing:-0.650px;">0:20:31</span>
<svg style="left:967px;top:669px;" width="16" height="19" viewBox="0 0 16 19"><path d="M3.5 9V6a4.5 4.5 0 0 1 9 0v3" stroke="#828282" stroke-width="2.8" fill="none"/><rect x="0" y="8" width="16" height="11" rx="1" fill="#828282"/><rect x="7.3" y="11.5" width="1.4" height="4" fill="#666"/></svg>
<svg style="left:1064px;top:679px;" width="9" height="8" viewBox="0 0 9 8"><g fill="#aaa"><rect x="6" y="0" width="2" height="2"/><rect x="3" y="3" width="2" height="2"/><rect x="6" y="3" width="2" height="2"/><rect x="0" y="6" width="2" height="2"/><rect x="3" y="6" width="2" height="2"/><rect x="6" y="6" width="2" height="2"/></g></svg>
<div style="left:329px;top:283px;width:418px;height:120px;background:#c4c8d4;border-radius:8px;border:1px solid #34096c;box-shadow:0 6px 20px rgba(0,0,0,.5);overflow:hidden;"></div>
<div style="left:329px;top:283px;width:418px;height:31px;background:#32066c;border-radius:8px 8px 0 0;"></div>
<span style="left:338.00px;top:291.00px;color:#fff;font-size:12px;letter-spacing:-0.295px;">Passwort</span>
<span style="left:386.50px;top:291.00px;color:#fff;font-size:12px;letter-spacing:-0.688px;">–</span>
<svg style="left:380px;top:284px;" width="200" height="28" viewBox="380 284 200 28"><path d="M391 299 L396 294 L402 292.3 L430 293.5 L470 294.5 L500 293.5 L530 294 L540 296 L546 289.5 L548.5 289 L541 298 L566 299.5 L567 301.5 L538 301.5 L535 306.5 L533 306 L533 303.5 L480 303.5 L440 304 L410 305.2 L395 305 Z" fill="#fe0000"/></svg>
<svg style="left:725px;top:293px;" width="11" height="11" viewBox="0 0 11 11"><path d="M0.5 0.5L10.5 10.5M10.5 0.5L0.5 10.5" stroke="#fff" stroke-width="1.1"/></svg>
<span style="left:338.00px;top:319.50px;color:#1c1c1c;font-size:12px;letter-spacing:-0.299px;">Passwort:</span>
<div style="left:338px;top:339px;width:400px;height:22px;background:#c4c8d4;border:1px solid #fff;border-bottom:2px solid #0a64c0;box-shadow:inset 0 1px 0 rgba(255,255,255,.4),inset 1px 0 0 rgba(255,255,255,.3),inset -1px 0 0 rgba(255,255,255,.3);"></div>
<div style="left:487px;top:370px;width:78px;height:23px;background:#fff;border:1px solid #0a64c0;border-radius:4px;"></div>
<div style="left:574px;top:370px;width:76px;height:23px;background:#fdfdfd;border:1px solid #e4e4e8;border-bottom-color:#b8b8c0;border-radius:4px;"></div>
<div style="left:659.5px;top:370px;width:76px;height:23px;background:#fdfdfd;border:1px solid #e4e4e8;border-bottom-color:#b8b8c0;border-radius:4px;"></div>
<span style="left:517.50px;top:374.00px;color:#111;font-size:12px;letter-spacing:-0.172px;">OK</span>
<span style="left:582.50px;top:374.00px;color:#111;font-size:12px;letter-spacing:0.106px;">Abbrechen</span>
<span style="left:684.50px;top:374.00px;color:#111;font-size:12px;letter-spacing:0.397px;">Hilfe</span>
</body></html>
